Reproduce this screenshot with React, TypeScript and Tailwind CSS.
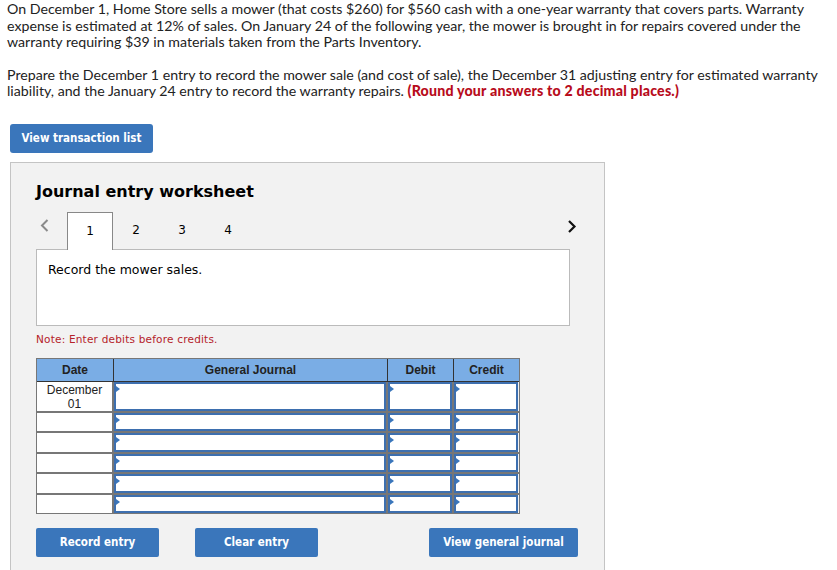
import React from "react";

const rows = [0, 1, 2, 3, 4, 5];

function InputCell({ width }: { width: string }) {
  return (
    <div className={`${width} h-full border-l-2 border-[#777] shrink-0`}>
      <div className="relative h-full border-2 border-[#3d6faf] bg-white">
        <span className="absolute left-0 top-[2px] w-0 h-0 border-y-[3px] border-y-transparent border-l-[4px] border-l-[#3a76bb]"></span>
      </div>
    </div>
  );
}

export default function App() {
  return (
    <div className="w-[837px] h-[570px] overflow-hidden bg-white relative">
      <div
        className="px-[7px] pt-[1px] text-[14.2px] leading-[16.5px] text-[#222]"
        style={{ fontFamily: "Lato, 'Open Sans', sans-serif" }}
      >
        <p>
          On December 1, Home Store sells a mower (that costs $260) for $560 cash with a one-year warranty that covers parts. Warranty
          expense is estimated at 12% of sales. On January 24 of the following year, the mower is brought in for repairs covered under the
          warranty requiring $39 in materials taken from the Parts Inventory.
        </p>
        <p className="mt-[16px]">
          Prepare the December 1 entry to record the mower sale (and cost of sale), the December 31 adjusting entry for estimated warranty
          liability, and the January 24 entry to record the warranty repairs.{" "}
          <span className="font-black text-[#b80c1c] tracking-[0.2px]">(Round your answers to 2 decimal places.)</span>
        </p>
      </div>

      <div className="pl-[10px] pt-[24px]">
        <button
          className="w-[143px] h-[29px] rounded-[3px] bg-[#3a76bb] text-white text-[11.5px] font-bold"
          style={{ fontFamily: "'DejaVu Sans Condensed', Verdana, sans-serif" }}
        >
          View transaction list
        </button>
      </div>

      <div
        className="ml-[10px] mt-[9px] w-[595px] h-[420px] bg-[#f2f2f2] border border-[#c4c4c4] pl-[25px]"
        style={{ fontFamily: "Verdana, 'DejaVu Sans', sans-serif" }}
      >
        <h2 className="pt-[18px] text-[16px] font-bold leading-[22px] text-black">Journal entry worksheet</h2>

        <div className="mt-[9px] flex items-end h-[37px] relative w-[534px]">
          <span className="absolute left-[4px] top-[7px]">
            <svg width="9" height="13" viewBox="0 0 9 13">
              <path d="M7.5 1 L2 6.5 L7.5 12" fill="none" stroke="#8a8a8a" strokeWidth="2" />
            </svg>
          </span>
          <div className="ml-[31px] w-[46px] h-[38px] bg-white border border-b-0 border-[#888] flex items-center justify-center text-[12px] text-black relative top-[1px] z-10">
            1
          </div>
          <div className="flex h-[37px] items-center text-[12px] text-black">
            <span className="w-[46px] text-center">2</span>
            <span className="w-[46px] text-center">3</span>
            <span className="w-[46px] text-center">4</span>
          </div>
          <span className="absolute right-[-7px] top-[8px]">
            <svg width="10" height="13" viewBox="0 0 10 13">
              <path d="M2 1 L7.5 6.5 L2 12" fill="none" stroke="#111" strokeWidth="2.2" />
            </svg>
          </span>
        </div>

        <div className="w-[534px] h-[77px] bg-white border border-[#bbb] px-[11px] pt-[12px] text-[12.5px] leading-[16px] text-black">
          Record the mower sales.
        </div>

        <p className="mt-[7px] text-[10.5px] leading-[13px] text-[#b5222a] tracking-[0.2px]">Note: Enter debits before credits.</p>

        <div
          className="mt-[12px] w-[484px] border border-[#777] text-[12px] text-[#222]"
          style={{ fontFamily: "'Liberation Sans', Arial, sans-serif" }}
        >
          <div className="flex h-[23px] bg-[#7aade5] font-bold border-b border-[#333]">
            <div className="w-[76px] flex items-center justify-center shrink-0">Date</div>
            <div className="w-[274px] flex items-center justify-center border-l border-[#333] shrink-0">General Journal</div>
            <div className="w-[66px] flex items-center justify-center border-l border-[#333] shrink-0">Debit</div>
            <div className="w-[66px] flex items-center justify-center border-l border-[#333] shrink-0">Credit</div>
          </div>
          {rows.map((r) => (
            <div
              key={r}
              className={`flex bg-[#f2f2f2] ${r === 0 ? "h-[29px]" : "h-[20.5px] border-t-2 border-[#777]"}`}
            >
              <div className="w-[75px] shrink-0 bg-white text-center leading-[14px]">
                {r === 0 ? (
                  <div className="pt-[1px]">
                    December
                    <br />
                    01
                  </div>
                ) : null}
              </div>
              <InputCell width="w-[274px]" />
              <InputCell width="w-[66px]" />
              <InputCell width="w-[66px]" />
            </div>
          ))}
        </div>

        <div
          className="mt-[14px] flex text-white text-[11.5px] font-bold"
          style={{ fontFamily: "'DejaVu Sans Condensed', Verdana, sans-serif" }}
        >
          <button className="shrink-0 w-[123px] h-[29px] rounded-[2px] bg-[#3a76bb]">Record entry</button>
          <button className="shrink-0 ml-[36px] w-[123px] h-[29px] rounded-[2px] bg-[#3a76bb]">Clear entry</button>
          <button className="shrink-0 ml-[111px] w-[149px] h-[29px] rounded-[2px] bg-[#3a76bb]">View general journal</button>
        </div>
      </div>
    </div>
  );
}
